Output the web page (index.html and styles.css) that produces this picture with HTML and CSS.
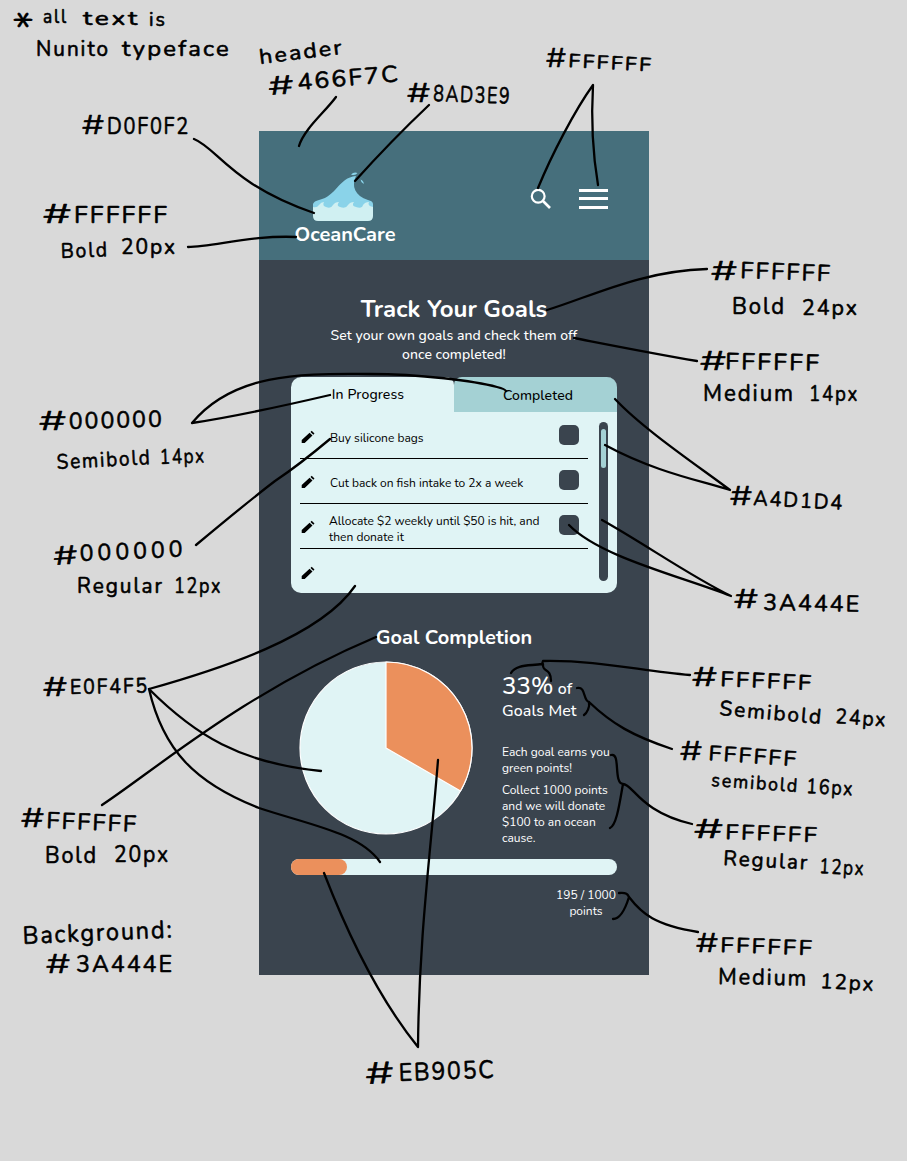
FILE: index.html
```html
<!DOCTYPE html>
<html lang="en">
<head>
<meta charset="utf-8">
<title>OceanCare – Track Your Goals</title>
<link rel="stylesheet" href="styles.css">
</head>
<body>
<main class="phone">
  <header class="header">
    <div class="brand">
      <svg class="wave" width="60" height="50" viewBox="0 0 60 50">
        <path fill="#8ad3e9" d="M0 31Q1 28 6 27C24 23 25 5 43 3C38 13 42 23 55 27Q60 28 60 31V38H0Z"/>
        <path fill="#8ad3e9" d="M38 1.5Q41-1.5 44.5 0Q42.500 3 38 1.500ZM47.500 6.500Q51 8 50.700 11Q48 10 47.500 6.500Z"/>
        <path fill="#d0f0f2" d="M0 34Q4 35 6 32Q8 29 11 29Q9 33 13 34Q18 36 20 32Q22 29 26 29Q23 33 27 34Q33 36 35 32Q37 29 41 29Q38 33 43 34Q49 36 50 32Q52 29 56 29Q54 33 60 34V43Q60 48 55 48H5Q0 48 0 43Z"/>
      </svg>
      <div class="brand-name">OceanCare</div>
    </div>
    <div class="actions">
      <svg width="22" height="22" viewBox="0 0 22 22" fill="none" stroke="#fff" stroke-width="2.2"><circle cx="8.2" cy="8.2" r="6.4"/><path d="M13 13L20 20" stroke-width="2.6"/></svg>
      <svg width="29" height="22" viewBox="0 0 29 22" fill="#fff"><path d="M0 1h29v3H0zM0 9h29v3H0zM0 18h29v3H0z"/></svg>
    </div>
  </header>

  <h1 class="title">Track Your Goals</h1>
  <p class="lead">Set your own goals and check them off<br>once completed!</p>

  <section class="card">
    <div class="tabs">
      <div class="tab active">In Progress</div>
      <div class="tab done"><span>Completed</span></div>
    </div>
    <div class="card-body">
      <div class="goals">
        <div class="goal"><svg class="pencil" viewBox="0 0 14 14"><path d="M.7 13V10L8.600 2.700L11.500 5.500L3.700 13ZM9.500 1.900L10.700.7L13.500 3.500L12.300 4.700Z"/></svg><span class="goal-text">Buy silicone bags</span><i class="check"></i></div>
        <div class="goal"><svg class="pencil" viewBox="0 0 14 14"><path d="M.7 13V10L8.600 2.700L11.500 5.500L3.700 13ZM9.500 1.900L10.700.7L13.500 3.500L12.300 4.700Z"/></svg><span class="goal-text">Cut back on fish intake to 2x a week</span><i class="check"></i></div>
        <div class="goal"><svg class="pencil" viewBox="0 0 14 14"><path d="M.7 13V10L8.600 2.700L11.500 5.500L3.700 13ZM9.500 1.900L10.700.7L13.500 3.500L12.300 4.700Z"/></svg><span class="goal-text two">Allocate $2 weekly until $50 is hit, and<br>then donate it</span><i class="check"></i></div>
        <div class="goal last"><svg class="pencil" viewBox="0 0 14 14"><path d="M.7 13V10L8.600 2.700L11.500 5.500L3.700 13ZM9.500 1.900L10.700.7L13.500 3.500L12.300 4.700Z"/></svg></div>
      </div>
      <div class="scrollbar"><div class="thumb"></div></div>
    </div>
  </section>

  <h2 class="subtitle">Goal Completion</h2>
  <section class="stats">
    <svg class="pie" width="174" height="174" viewBox="-87 -87 174 174" stroke="#fff" stroke-width="1.2">
      <circle r="86" fill="#e0f4f5"/>
      <path fill="#eb905c" stroke-linejoin="round" d="M0 0V-86A86 86 0 0 1 74.5 43Z"/>
    </svg>
    <div class="facts">
      <div class="met"><span class="percent">33%</span> of<br>Goals Met</div>
      <p class="note">Each goal earns you<br>green points!</p>
      <p class="note">Collect 1000 points<br>and we will donate<br>$100 to an ocean<br>cause.</p>
    </div>
  </section>
  <div class="progress"><div class="progress-fill"></div></div>
  <div class="points">195 / 1000<br>points</div>
</main>

<svg class="notes" width="907" height="1161" viewBox="0 0 907 1161">
  <g class="lines">
    <path d="M336 97C325 112 304 129 299 146"/>
    <path d="M429 105Q391 141 355 181"/>
    <path d="M538 188C552 154 575 110 593 85C591 120 593 155 598 185"/>
    <path d="M194 139C217 148 232 185 314 213"/>
    <path d="M188 247C215 246 255 235 296 237"/>
    <path d="M547 310C590 297 640 271 707 269"/>
    <path d="M574 338C600 343 650 353 697 361"/>
    <path d="M330 395Q240 416 192 423C236 370 310 374 370 374C420 374 475 381 497 387Q505 389 506 391"/>
    <path d="M196 545C238 510 250 500 275 481Q299 465 330 439"/>
    <path d="M615 399C643 429 698 466 730 490C698 480 655 472 605 445"/>
    <path d="M602 520C645 544 690 576 731 596C680 576 600 557 569 525"/>
    <path d="M355 586C320 637 220 669 149 689C195 735 240 763 321 771"/>
    <path d="M149 689C163 750 195 783 259 808C310 825 360 833 380 862"/>
    <path d="M102 805C155 770 245 692 376 637"/>
    <path d="M511 673C516 664 530 666 542 664L543 661C600 660 640 671 690 675M543 664C542 673 551 667 551 681"/>
    <path d="M577 688C586 686 583 701 589 702C612 724 633 736 672 749M589 702C590 707 587 713 584 715"/>
    <path d="M611 755C621 752 613 783 623 784C633 784 640 812 692 824M623 784C620 800 617 825 610 828"/>
    <path d="M619 893C627 892 628 895 629 897C642 914 655 925 698 932M629 897C625 910 620 919 613 919"/>
    <path d="M324 873C350 940 380 1000 418 1047C419 935 431 850 438 760"/>
  </g>
  <g class="hand">
    <text class="star" x="12" y="43" textLength="22" lengthAdjust="spacingAndGlyphs">*</text>
    <text class="s" x="43" y="23" textLength="25" lengthAdjust="spacingAndGlyphs">all</text>
    <text class="s" x="83" y="25" textLength="57" lengthAdjust="spacingAndGlyphs">text</text>
    <text class="s" x="149" y="26" textLength="18" lengthAdjust="spacingAndGlyphs">is</text>
    <text x="36" y="56" textLength="74" lengthAdjust="spacingAndGlyphs">Nunito</text>
    <text x="122" y="56" textLength="109" lengthAdjust="spacingAndGlyphs">typeface</text>

    <text transform="translate(260 64) rotate(-7)" textLength="85" lengthAdjust="spacingAndGlyphs">header</text>
    <text class="h" transform="translate(269 95) rotate(-4)" textLength="25" lengthAdjust="spacingAndGlyphs">#</text>
    <text class="l" transform="translate(298 90) rotate(-5)" textLength="103" lengthAdjust="spacingAndGlyphs">466F7C</text>

    <text class="h" x="407" y="102" textLength="23" lengthAdjust="spacingAndGlyphs">#</text>
    <text class="l" transform="translate(433 101) rotate(2)" textLength="78" lengthAdjust="spacingAndGlyphs">8AD3E9</text>

    <text class="h" x="546" y="67" textLength="20" lengthAdjust="spacingAndGlyphs">#</text>
    <text class="s" transform="translate(568 67) rotate(3)" textLength="85" lengthAdjust="spacingAndGlyphs">FFFFFF</text>

    <text class="h" x="82" y="134" textLength="22" lengthAdjust="spacingAndGlyphs">#</text>
    <text class="l" x="107" y="134" textLength="83" lengthAdjust="spacingAndGlyphs">D0F0F2</text>

    <text class="h" x="43" y="223" textLength="28" lengthAdjust="spacingAndGlyphs">#</text>
    <text class="l" x="74" y="223" textLength="95" lengthAdjust="spacingAndGlyphs">FFFFFF</text>
    <text transform="translate(61 258) rotate(-2)" textLength="48" lengthAdjust="spacingAndGlyphs">Bold</text>
    <text x="121" y="254" textLength="56" lengthAdjust="spacingAndGlyphs">20px</text>

    <text class="h" x="711" y="280" textLength="26" lengthAdjust="spacingAndGlyphs">#</text>
    <text class="l" transform="translate(740 278) rotate(2)" textLength="92" lengthAdjust="spacingAndGlyphs">FFFFFF</text>
    <text class="l" x="732" y="314" textLength="54" lengthAdjust="spacingAndGlyphs">Bold</text>
    <text x="802" y="315" textLength="57" lengthAdjust="spacingAndGlyphs">24px</text>

    <text class="h" x="700" y="370" textLength="26" lengthAdjust="spacingAndGlyphs">#</text>
    <text class="l" transform="translate(725 369) rotate(1)" textLength="96" lengthAdjust="spacingAndGlyphs">FFFFFF</text>
    <text class="l" x="703" y="401" textLength="92" lengthAdjust="spacingAndGlyphs">Medium</text>
    <text x="809" y="401" textLength="50" lengthAdjust="spacingAndGlyphs">14px</text>

    <text class="h" x="730" y="505" textLength="22" lengthAdjust="spacingAndGlyphs">#</text>
    <text transform="translate(753 505) rotate(3)" textLength="91" lengthAdjust="spacingAndGlyphs">A4D1D4</text>

    <text class="h" x="734" y="608" textLength="24" lengthAdjust="spacingAndGlyphs">#</text>
    <text class="l" transform="translate(763 610) rotate(1)" textLength="98" lengthAdjust="spacingAndGlyphs">3A444E</text>

    <text class="h" x="692" y="686" textLength="25" lengthAdjust="spacingAndGlyphs">#</text>
    <text transform="translate(720 686) rotate(2.5)" textLength="93" lengthAdjust="spacingAndGlyphs">FFFFFF</text>
    <text transform="translate(719 715) rotate(5)" textLength="104" lengthAdjust="spacingAndGlyphs">Semibold</text>
    <text transform="translate(835 723) rotate(4)" textLength="52" lengthAdjust="spacingAndGlyphs">24px</text>

    <text class="h" x="680" y="760" textLength="22" lengthAdjust="spacingAndGlyphs">#</text>
    <text transform="translate(708 760) rotate(4)" textLength="90" lengthAdjust="spacingAndGlyphs">FFFFFF</text>
    <text class="s" transform="translate(711 786) rotate(4)" textLength="88" lengthAdjust="spacingAndGlyphs">semibold</text>
    <text transform="translate(806 793) rotate(3)" textLength="48" lengthAdjust="spacingAndGlyphs">16px</text>

    <text class="h" x="694" y="838" textLength="29" lengthAdjust="spacingAndGlyphs">#</text>
    <text transform="translate(725 839) rotate(2)" textLength="94" lengthAdjust="spacingAndGlyphs">FFFFFF</text>
    <text transform="translate(723 865) rotate(3)" textLength="86" lengthAdjust="spacingAndGlyphs">Regular</text>
    <text transform="translate(819 873) rotate(3)" textLength="46" lengthAdjust="spacingAndGlyphs">12px</text>

    <text class="h" x="696" y="952" textLength="22" lengthAdjust="spacingAndGlyphs">#</text>
    <text transform="translate(720 952) rotate(2)" textLength="94" lengthAdjust="spacingAndGlyphs">FFFFFF</text>
    <text class="l" transform="translate(718 984) rotate(1)" textLength="90" lengthAdjust="spacingAndGlyphs">Medium</text>
    <text transform="translate(820 988) rotate(3)" textLength="55" lengthAdjust="spacingAndGlyphs">12px</text>

    <text class="h" x="39" y="430" textLength="27" lengthAdjust="spacingAndGlyphs">#</text>
    <text class="l" transform="translate(69 429) rotate(-1.5)" textLength="95" lengthAdjust="spacingAndGlyphs">000000</text>
    <text transform="translate(57 469) rotate(-3)" textLength="95" lengthAdjust="spacingAndGlyphs">Semibold</text>
    <text transform="translate(160 464) rotate(-2)" textLength="46" lengthAdjust="spacingAndGlyphs">14px</text>

    <text class="h" transform="translate(54 565) rotate(-4)" textLength="24" lengthAdjust="spacingAndGlyphs">#</text>
    <text class="l wide" transform="translate(80 561) rotate(-2.5)" textLength="107" lengthAdjust="spacingAndGlyphs">000000</text>
    <text x="77" y="593" textLength="87" lengthAdjust="spacingAndGlyphs">Regular</text>
    <text x="174" y="593" textLength="48" lengthAdjust="spacingAndGlyphs">12px</text>

    <text class="h" x="43" y="696" textLength="24" lengthAdjust="spacingAndGlyphs">#</text>
    <text transform="translate(70 694) rotate(-1)" textLength="79" lengthAdjust="spacingAndGlyphs">E0F4F5</text>

    <text class="h" x="21" y="827" textLength="23" lengthAdjust="spacingAndGlyphs">#</text>
    <text class="l" transform="translate(46 828) rotate(2.5)" textLength="92" lengthAdjust="spacingAndGlyphs">FFFFFF</text>
    <text class="l" x="45" y="863" textLength="53" lengthAdjust="spacingAndGlyphs">Bold</text>
    <text class="l" x="114" y="862" textLength="56" lengthAdjust="spacingAndGlyphs">20px</text>

    <text class="xl" transform="translate(23 944) rotate(-2.5)" textLength="151" lengthAdjust="spacingAndGlyphs">Background:</text>
    <text class="h" x="46" y="973" textLength="24" lengthAdjust="spacingAndGlyphs">#</text>
    <text class="l" x="76" y="972" textLength="98" lengthAdjust="spacingAndGlyphs">3A444E</text>

    <text class="h xh" transform="translate(366 1084) rotate(-3)" textLength="28" lengthAdjust="spacingAndGlyphs">#</text>
    <text class="xl" transform="translate(399 1081) rotate(-2)" textLength="97" lengthAdjust="spacingAndGlyphs">EB905C</text>
  </g>
</svg>
</body>
</html>
```
FILE: styles.css
```css
* { box-sizing: border-box; }
body {
  margin: 0;
  padding: 131px 0 0 259px;
  width: 907px;
  height: 1161px;
  position: relative;
  overflow: hidden;
  background: #d9d9d9;
  font-family: Nunito, Lato, sans-serif;
}
h1, h2, p { margin: 0; }
.phone { width: 390px; height: 844px; background: #3a444e; color: #fff; }
.header {
  height: 129px;
  background: #466f7c;
  display: flex;
  justify-content: space-between;
  padding: 42px 41px 0 35px;
}
.brand { display: flex; flex-direction: column; align-items: center; width: 102px; }
.wave { display: block; margin-left: -4px; overflow: visible; }
.brand-name { font-size: 20px; font-weight: 700; line-height: 24px; }
.actions { display: flex; gap: 27px; padding-top: 15px; }

.title { margin-top: 32px; text-align: center; font-size: 24px; line-height: 34px; font-weight: 700; }
.lead { text-align: center; font-size: 14px; line-height: 19px; font-weight: 500; white-space: nowrap; letter-spacing: .03px; }

.card { margin: 13px 32px 0; height: 216px; border-radius: 10px; overflow: hidden; background: #e0f4f5; color: #000; }
.tabs { display: flex; height: 35px; background: #3a444e; }
.tab { width: 163px; text-align: center; font-size: 14px; line-height: 35px; font-weight: 500; letter-spacing: .1px; }
.active { background: #e0f4f5; border-radius: 10px 8px 0 0; padding-right: 9px; }
.done { background: #a4d1d4; border-radius: 8px 0 0 0; padding: 1px 0 0 5px; }
.card-body { display: flex; justify-content: space-between; padding: 2px 9px 0; height: 181px; }
.goals { width: 288px; }
.goal { height: 45px; display: flex; border-bottom: 1px solid #000; font-size: 12px; line-height: 16px; }
.last { border: 0; }
.pencil { width: 14px; height: 14px; margin: 16px 15px 0 1px; flex: none; }
.last .pencil { margin-top: 17px; }
.goal-text { flex: 1; padding-top: 16px; white-space: nowrap; }
.two { padding-top: 9px; margin-left: -1px; }
.check { width: 20px; height: 20px; border-radius: 5px; margin: 11px 9px 0 0; background: #3a444e; }
.scrollbar { width: 9px; height: 159px; margin-top: 8px; border-radius: 5px; background: #3a444e; padding: 7px 2px; }
.thumb { height: 39px; border-radius: 3px; background: #a4d1d4; }

.subtitle { margin-top: 31px; text-align: center; font-size: 20px; line-height: 28px; font-weight: 700; }
.stats { display: flex; margin-top: 9px; height: 198px; padding-left: 40px; }
.facts { margin-left: 29px; padding-top: 9px; white-space: nowrap; }
.met { font-size: 16px; line-height: 18px; font-weight: 500; height: 74px; letter-spacing: .1px; }
.percent { font-size: 24px; line-height: 32px; }
.note { font-size: 12px; line-height: 16px; margin-bottom: 6px; }
.progress { margin: 0 32px; height: 16px; border-radius: 8px; background: #e0f4f5; }
.progress-fill { width: 56px; height: 16px; border-radius: 8px; background: #eb905c; }
.points { margin: 12px 33px 0 auto; width: 60px; text-align: center; font-size: 12px; line-height: 16px; white-space: nowrap; }

.notes { position: absolute; left: 0; top: 0; }
.lines path { fill: none; stroke: #000; stroke-width: 2.3; stroke-linecap: round; stroke-linejoin: round; }
.hand text { font-family: Nunito, Lato, sans-serif; font-size: 21px; fill: #000; stroke: #000; stroke-width: .6px; stroke-linejoin: round; letter-spacing: 2px; }
.hand .s { font-size: 19px; }
.hand .l { font-size: 23px; }
.hand .xl { font-size: 25px; }
.hand .wide { letter-spacing: 4px; }
.hand .h { font-family: Inter, sans-serif; font-size: 25px; font-weight: 300; letter-spacing: 0; }
.hand .xh { font-size: 29px; }
.hand .star { font-size: 42px; letter-spacing: 0; stroke-width: .2px; }
```
